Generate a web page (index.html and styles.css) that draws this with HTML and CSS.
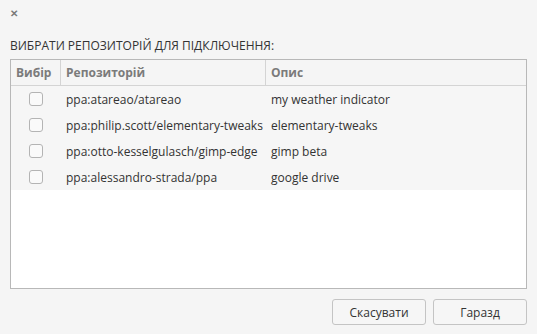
FILE: index.html
```html
<!DOCTYPE html>
<html lang="uk">
<head>
  <meta charset="UTF-8" />
  <title>Репозиторії</title>
  <link rel="stylesheet" href="styles.css">
</head>
<body>
  <div class="dialog">
    <div class="titlebar">
      <span class="close">&#x2715;</span>
    </div>

    <div class="label">ВИБРАТИ РЕПОЗИТОРІЙ ДЛЯ ПІДКЛЮЧЕННЯ:</div>

    <div class="table">
      <div class="row head">
        <div class="cell col-pick">Вибір</div>
        <div class="cell col-repo">Репозиторій</div>
        <div class="cell col-desc">Опис</div>
      </div>
      <div class="row">
        <div class="cell col-pick"><span class="check"></span></div>
        <div class="cell col-repo">ppa:atareao/atareao</div>
        <div class="cell col-desc">my weather indicator</div>
      </div>
      <div class="row">
        <div class="cell col-pick"><span class="check"></span></div>
        <div class="cell col-repo">ppa:philip.scott/elementary-tweaks</div>
        <div class="cell col-desc">elementary-tweaks</div>
      </div>
      <div class="row">
        <div class="cell col-pick"><span class="check"></span></div>
        <div class="cell col-repo">ppa:otto-kesselgulasch/gimp-edge</div>
        <div class="cell col-desc">gimp beta</div>
      </div>
      <div class="row">
        <div class="cell col-pick"><span class="check"></span></div>
        <div class="cell col-repo">ppa:alessandro-strada/ppa</div>
        <div class="cell col-desc">google drive</div>
      </div>
      <div class="empty"></div>
    </div>

    <div class="buttons">
      <button>Скасувати</button>
      <button>Гаразд</button>
    </div>
  </div>
</body>
</html>
```

FILE: styles.css
```css
* {
  box-sizing: border-box;
}

body {
  margin: 0;
  background: #f5f5f5;
  font-family: "Open Sans", sans-serif;
  font-size: 12px;
  color: #333;
}

.dialog {
  width: 537px;
  height: 334px;
  display: flex;
  flex-direction: column;
  padding: 0 10px;
}

.titlebar {
  height: 24px;
  padding-top: 4px;
}

.close {
  display: inline-block;
  color: #7a7a7a;
  font-size: 10px;
  font-weight: bold;
  line-height: 16px;
}

.label {
  margin-top: 13px;
  height: 22px;
  color: #333;
  font-size: 12px;
}

.table {
  border: 1px solid #b8b8b8;
  background: #fff;
  height: 230px;
  display: flex;
  flex-direction: column;
}

.row {
  display: flex;
  height: 26px;
  align-items: center;
  background: #f6f6f6;
}

.row.head {
  height: 26px;
  border-bottom: 1px solid #d4d4d4;
  background: #f5f5f5;
  color: #7b7b7b;
  font-weight: bold;
}

.cell {
  height: 100%;
  display: flex;
  align-items: center;
  padding-left: 5px;
  white-space: nowrap;
}

.col-pick {
  width: 50px;
  justify-content: center;
  padding-left: 0;
}

.col-repo {
  width: 205px;
}

.col-desc {
  flex: 1;
}

.head .col-pick,
.head .col-repo {
  border-right: 1px solid #d4d4d4;
}

.head .col-pick {
  justify-content: flex-start;
  padding-left: 5px;
}

.check {
  display: block;
  width: 14px;
  height: 14px;
  border: 1px solid #b4b4b4;
  border-radius: 3px;
  background: #fafafa;
}

.empty {
  flex: 1;
  background: #fff;
}

.buttons {
  display: flex;
  justify-content: flex-end;
  gap: 7px;
  margin-top: 10px;
}

button {
  width: 94px;
  height: 26px;
  font-family: "Open Sans", sans-serif;
  font-size: 12px;
  color: #333;
  background: #f6f6f6;
  border: 1px solid #c4c4c4;
  border-radius: 3px;
}
```
